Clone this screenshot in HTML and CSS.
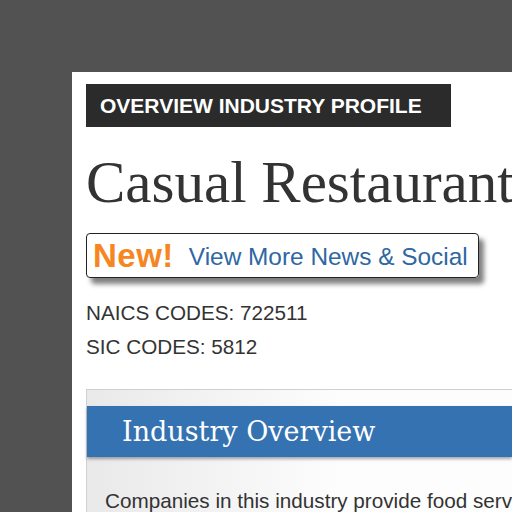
FILE: index.html
```html
<!DOCTYPE html>
<html>
<head>
<meta charset="utf-8">
<link rel="stylesheet" href="styles.css">
</head>
<body>
<div class="panel">
  <div class="tag">OVERVIEW INDUSTRY PROFILE</div>
  <h1 class="title">Casual Restaurants</h1>
  <a class="news-btn" href="#"><span class="new">New!</span><span class="news-text">View More News &amp; Social</span></a>
  <div class="codes">
    <div class="code">NAICS CODES: 722511</div>
    <div class="code">SIC CODES: 5812</div>
  </div>
  <section class="section">
    <h2 class="section-head">Industry Overview</h2>
    <p class="section-body">Companies in this industry provide food services to customers who order and are served while seated</p>
  </section>
</div>
</body>
</html>
```

FILE: styles.css
```css
html, body {
  margin: 0;
  padding: 0;
  background: #525252;
  overflow: hidden;
  height: 512px;
}
.panel {
  margin: 72px 0 0 72px;
  background: #fff;
  padding: 12px 0 0 14px;
  height: 600px;
  white-space: nowrap;
  overflow: hidden;
}
.tag {
  display: inline-block;
  background: #2b2b2b;
  color: #fff;
  font-family: "Liberation Sans", Arial, sans-serif;
  font-weight: bold;
  font-size: 21px;
  height: 43px;
  line-height: 43px;
  padding: 0 29px 0 14px;
}
.title {
  margin: 25px 0 0 0;
  font-family: "Liberation Serif", serif;
  font-weight: normal;
  font-size: 59px;
  line-height: 60px;
  color: #333;
}
.news-btn {
  margin-top: 21px;
  display: inline-flex;
  align-items: center;
  height: 43px;
  border: 1px solid #222;
  border-radius: 4px;
  padding: 0 10px 0 6px;
  text-decoration: none;
  box-shadow: 5px 6px 5px rgba(0,0,0,0.5);
  font-family: "Liberation Sans", Arial, sans-serif;
}
.new {
  color: #f6861f;
  font-weight: bold;
  font-size: 33px;
  letter-spacing: 0.5px;
  margin-right: 15px;
}
.news-text {
  color: #2e67a3;
  font-size: 24.4px;
  padding-top: 2px;
}
.codes {
  margin-top: 18px;
  font-family: "Liberation Sans", Arial, sans-serif;
  font-size: 20.7px;
  line-height: 34px;
  color: #333;
}
.section {
  margin-top: 25px;
  border: 1px solid #d0d0d0;
  border-right: none;
  padding-top: 16px;
  background: linear-gradient(to right, #e9e9e9, #fdfdfd 60%);
}
.section-head {
  margin: 0;
  height: 51px;
  display: flex;
  align-items: center;
  padding-left: 35px;
  background: #3572b2;
  color: #fff;
  font-family: "DejaVu Serif", serif;
  font-weight: normal;
  font-size: 27px;
  box-shadow: 0 2px 3px rgba(0,0,0,0.35);
}
.section-body {
  margin: 0;
  padding: 30px 0 20px 18px;
  font-family: "Liberation Sans", Arial, sans-serif;
  font-size: 20.7px;
  line-height: 28px;
  color: #333;
}
```
